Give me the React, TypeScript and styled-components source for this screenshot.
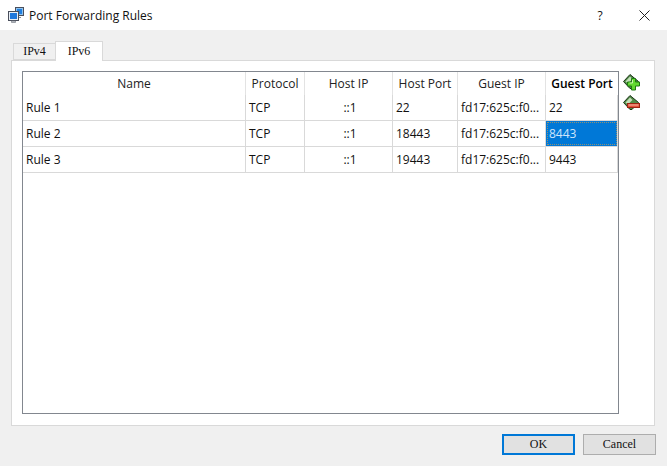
import { FC } from "react";
import styled, { createGlobalStyle } from "styled-components";

const GlobalStyle = createGlobalStyle`
  html, body {
    margin: 0;
    padding: 0;
    background: #f0f0f0;
  }
  * {
    box-sizing: border-box;
  }
`;

const COLUMNS = "223px 59px 88px 65px 88px 72px";

const rules = [
  { name: "Rule 1", hostPort: "22", guestPort: "22" },
  { name: "Rule 2", hostPort: "18443", guestPort: "8443", selected: true },
  { name: "Rule 3", hostPort: "19443", guestPort: "9443" },
];

const AppIcon: FC = () => (
  <svg width="17" height="17" viewBox="0 0 17 17">
    <rect x="7.5" y="0.5" width="8" height="8" fill="#8fc2ee" stroke="#4a4f5c" />
    <rect x="9" y="2" width="5" height="5" fill="#1f7fe0" />
    <path d="M10 8.5v2h3" fill="none" stroke="#8a8f98" />
    <rect x="0.5" y="4.5" width="10" height="9" fill="#e8eef5" stroke="#4a4f5c" />
    <rect x="2" y="6" width="7" height="6" fill="#1f78dc" />
    <path d="M3.5 14h4v1.5h-4z" fill="#c8ccd2" stroke="#70757f" strokeWidth="0.6" />
  </svg>
);

const CloseIcon: FC = () => (
  <svg width="11" height="11" viewBox="0 0 11 11">
    <path d="M0.5 0.5l10 10M10.5 0.5l-10 10" stroke="#222" strokeWidth="1" fill="none" />
  </svg>
);

const AddIcon: FC = () => (
  <svg width="17" height="17" viewBox="0 0 17 17">
    <path d="M7 0.5L0.5 7.5 7 14.5h2l6.5-7z" fill="#4f8a45" stroke="#1c331a" />
    <path d="M2.5 7.5L7 2.5l2.5 2.5-4.5 4.5z" fill="#c4dfba" />
    <path d="M8.5 4.5h4v3.5h4v4h-4v4h-4v-4h-4v-4h4z" fill="#62d930" stroke="#1f7a12" />
    <path d="M9.5 6v3h-3" fill="none" stroke="#c8f5b0" />
  </svg>
);

const RemoveIcon: FC = () => (
  <svg width="17" height="17" viewBox="0 0 17 17">
    <path d="M7 0.5L0.5 7.5 7 14.5h2l6.5-7z" fill="#4f8a45" stroke="#1c331a" />
    <path d="M2.5 7.5L7 2.5l2.5 2.5-4.5 4.5z" fill="#c4dfba" />
    <rect x="4.5" y="8.5" width="12" height="4" fill="#e2503a" stroke="#9c2414" />
    <rect x="5.5" y="9.5" width="10" height="1" fill="#f6b9a8" />
  </svg>
);

const App: FC = () => {
  return (
    <>
      <GlobalStyle />
      <Window>
        <TitleBar>
          <AppIcon />
          <Title>Port Forwarding Rules</Title>
          <Help>?</Help>
          <CloseButton>
            <CloseIcon />
          </CloseButton>
        </TitleBar>
        <Body>
          <Tabs>
            <Tab>IPv4</Tab>
            <Tab active>IPv6</Tab>
          </Tabs>
          <Panel>
            <Table>
              <HeaderRow>
                <HeaderCell>Name</HeaderCell>
                <HeaderCell>Protocol</HeaderCell>
                <HeaderCell>Host IP</HeaderCell>
                <HeaderCell>Host Port</HeaderCell>
                <HeaderCell>Guest IP</HeaderCell>
                <HeaderCell current>Guest Port</HeaderCell>
              </HeaderRow>
              {rules.map(rule => (
                <Row key={rule.name}>
                  <Cell>{rule.name}</Cell>
                  <Cell>TCP</Cell>
                  <Cell center>::1</Cell>
                  <Cell>{rule.hostPort}</Cell>
                  <Cell>fd17:625c:f0...</Cell>
                  <Cell selected={rule.selected}>{rule.guestPort}</Cell>
                </Row>
              ))}
            </Table>
            <SideTools>
              <AddIcon />
              <RemoveIcon />
            </SideTools>
          </Panel>
          <Footer>
            <DialogButton primary>OK</DialogButton>
            <DialogButton>Cancel</DialogButton>
          </Footer>
        </Body>
      </Window>
    </>
  );
};

export default App;

const Window = styled.div`
  width: 667px;
  height: 466px;
  display: flex;
  flex-direction: column;
  overflow: hidden;
  font-family: "Open Sans", "Noto Sans", sans-serif;
  color: #111;
`;

const TitleBar = styled.div`
  height: 30px;
  flex: none;
  display: flex;
  align-items: center;
  padding-left: 8px;
  background: #fff;
`;

const Title = styled.span`
  margin-left: 4px;
  font-size: 12px;
  color: #111;
`;

const Help = styled.span`
  margin-left: auto;
  width: 12px;
  font-size: 12px;
  text-align: center;
`;

const CloseButton = styled.span`
  display: flex;
  margin: 0 17px 0 33px;
`;

const Body = styled.div`
  flex: 1;
  display: flex;
  flex-direction: column;
  padding: 11px 11px 0 11px;
  background: #f0f0f0;
`;

const Tabs = styled.div`
  height: 19px;
  flex: none;
  display: flex;
  align-items: flex-end;
  padding-left: 2px;
  position: relative;
  z-index: 1;
`;

const Tab = styled.div<{ active?: boolean }>`
  height: ${props => (props.active ? 20 : 17)}px;
  width: ${props => (props.active ? 48 : 43)}px;
  margin-bottom: ${props => (props.active ? -1 : 0)}px;
  margin-left: ${props => (props.active ? -1 : 0)}px;
  display: flex;
  align-items: center;
  justify-content: center;
  font-family: "Liberation Serif", serif;
  font-size: 12px;
  color: #111;
  background: ${props => (props.active ? "#fff" : "#f0f0f0")};
  border: 1px solid #d9d9d9;
  border-bottom: ${props => (props.active ? "none" : "1px solid #d9d9d9")};
`;

const Panel = styled.div`
  width: 644px;
  height: 366px;
  flex: none;
  display: flex;
  align-items: flex-start;
  gap: 4px;
  padding: 10px 0 0 10px;
  background: #fff;
  border: 1px solid #d9d9d9;
`;

const Table = styled.div`
  width: 597px;
  height: 343px;
  flex: none;
  border: 1px solid #82878f;
  background: #fff;
`;

const HeaderRow = styled.div`
  height: 23px;
  display: grid;
  grid-template-columns: ${COLUMNS};
`;

const HeaderCell = styled.div<{ current?: boolean }>`
  display: flex;
  align-items: center;
  justify-content: center;
  font-size: 12px;
  font-weight: ${props => (props.current ? 600 : 400)};
  white-space: nowrap;
  color: ${props => (props.current ? "#000" : "#222")};
  border-right: 1px solid #e3e3e3;

  &:last-child {
    border-right: none;
  }
`;

const Row = styled.div`
  height: 26px;
  display: grid;
  grid-template-columns: ${COLUMNS};
  border-bottom: 1px solid #d9d9d9;
`;

const Cell = styled.div<{ center?: boolean; selected?: boolean }>`
  display: flex;
  align-items: center;
  justify-content: ${props => (props.center ? "center" : "flex-start")};
  padding-left: 3px;
  font-size: 12px;
  white-space: nowrap;
  overflow: hidden;
  border-right: 1px solid #d9d9d9;
  color: ${props => (props.selected ? "#cfe6fb" : "#111")};
  background: ${props => (props.selected ? "#0078d7" : "transparent")};
  background-clip: padding-box;
  outline: ${props => (props.selected ? "1px dotted rgba(240, 160, 48, 0.6)" : "none")};
  outline-offset: -2px;
`;

const SideTools = styled.div`
  display: flex;
  flex-direction: column;
  gap: 4px;
  padding-top: 3px;
`;

const Footer = styled.div`
  display: flex;
  justify-content: flex-end;
  gap: 8px;
  padding: 8px 0 0 0;
`;

const DialogButton = styled.div<{ primary?: boolean }>`
  width: 73px;
  height: 21px;
  display: flex;
  align-items: center;
  justify-content: center;
  font-family: "Liberation Serif", serif;
  font-size: 12px;
  color: #111;
  background: #e1e1e1;
  border: ${props => (props.primary ? "2px solid #0078d7" : "1px solid #adadad")};
`;
